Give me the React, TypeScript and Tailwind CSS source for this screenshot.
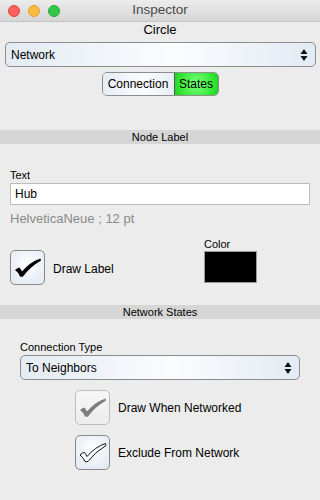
import React from "react";

const font = { fontFamily: '"Liberation Sans", Arial, sans-serif' };

function Arrows() {
  return (
    <svg width="8" height="14" viewBox="0 0 8 14" className="block">
      <path d="M4 1 L7.5 6 L0.5 6 Z" fill="#111" />
      <path d="M4 13 L7.5 8 L0.5 8 Z" fill="#111" />
    </svg>
  );
}

function Popup({ label, className }: { label: string; className: string }) {
  return (
    <div
      className={
        "h-[25px] rounded-[5px] border border-[#8d8d8d] bg-[linear-gradient(90deg,#e3ebf4,#fbfcfe_55%,#e2eaf3)] flex items-center justify-between pl-[5px] pr-[7px] text-[12px] text-black " +
        className
      }
    >
      <span>{label}</span>
      <Arrows />
    </div>
  );
}

const checkPath =
  "M5 20 Q7.5 17.5 9.5 17.5 Q11 19.5 12 21.5 Q20 12 30.5 8.5 L31 10.5 Q20 17 13 26.5 Q11.5 27 10 26.5 Q8 22 5 20 Z";

function CheckBox({ kind }: { kind: "black" | "gray" | "outline" }) {
  const border = kind === "gray" ? "border-[#bdbdbd]" : "border-[#8a8a8a]";
  const bg =
    kind === "gray"
      ? "bg-[linear-gradient(180deg,#f7f7f7,#ececec)]"
      : "bg-[radial-gradient(circle_at_50%_40%,#ffffff,#e6edf5_75%,#dfe7f0)]";
  return (
    <div className={"w-[35px] h-[35px] rounded-[5px] border " + border + " " + bg + " shrink-0"}>
      <svg width="33" height="33" viewBox="1 1 33 33" className="block">
        {kind === "black" && <path d={checkPath} fill="#000" />}
        {kind === "gray" && <path d={checkPath} fill="#7d7d7d" />}
        {kind === "outline" && (
          <path d={checkPath} fill="#fafcfe" stroke="#111" strokeWidth="1" strokeLinejoin="round" />
        )}
      </svg>
    </div>
  );
}

export default function App() {
  return (
    <div className="w-[320px] h-[500px] bg-[#ececec] overflow-hidden flex flex-col" style={font}>
      {/* title bar */}
      <div className="relative h-[22px] shrink-0 bg-[linear-gradient(180deg,#ececec,#d6d6d6)] border-b border-[#c4c4c4] flex items-center justify-center">
        <div className="absolute left-[8px] top-[5px] flex gap-[8px]">
          <div className="w-[12px] h-[12px] rounded-full bg-[#fc605c] border border-[#e0443e]" />
          <div className="w-[12px] h-[12px] rounded-full bg-[#fdbc40] border border-[#de9f34]" />
          <div className="w-[12px] h-[12px] rounded-full bg-[#34c84a] border border-[#27aa35]" />
        </div>
        <span className="text-[13.5px] text-[#4a4a4a]">Inspector</span>
      </div>

      <div className="h-[15px] leading-[15px] text-[13px] text-center text-black">Circle</div>

      <Popup label="Network" className="mt-[5px] ml-[5px] mr-[4px]" />

      <div className="mt-[5px] flex justify-center">
        <div className="h-[24px] flex rounded-[5px] border border-[#8d8d8d] overflow-hidden text-[12px] text-black">
          <div className="w-[72px] flex items-center justify-center bg-[linear-gradient(90deg,#e6edf5,#fbfcfe_60%,#e6edf5)] border-r border-[#555]">
            Connection
          </div>
          <div className="w-[43px] flex items-center justify-center bg-[radial-gradient(circle_at_50%_50%,#7cff7c,#33e833_70%,#22cc22)]">
            States
          </div>
        </div>
      </div>

      <div className="mt-[34px] h-[14px] leading-[14px] bg-[#d6d6d6] text-center text-[11px] text-black">
        Node Label
      </div>

      <div className="mt-[25px] ml-[10px] h-[13px] leading-[13px] text-[11px] text-black">Text</div>
      <div className="mt-[1px] ml-[10px] w-[300px] h-[22px] bg-white border border-[#bdbdbd] flex items-center pl-[4px] text-[12px] text-black">
        Hub
      </div>

      <div className="mt-[6px] ml-[10px] h-[16px] leading-[16px] text-[13px] text-[#8a8a8a]">
        HelveticaNeue ; 12 pt
      </div>

      <div className="mt-[11px] flex">
        <div className="ml-[10px] w-[194px] pt-[12px] flex items-center">
          <CheckBox kind="black" />
          <span className="ml-[8px] mt-[3px] text-[12px] text-black">Draw Label</span>
        </div>
        <div className="flex flex-col">
          <div className="h-[12px] leading-[12px] text-[11px] text-black">Color</div>
          <div className="mt-[1px] w-[53px] h-[32px] bg-black border border-[#9a9a9a]" />
        </div>
      </div>

      <div className="mt-[20px] h-[14px] leading-[14px] bg-[#d6d6d6] text-center text-[11px] text-black">
        Network States
      </div>

      <div className="mt-[22px] ml-[20px] h-[13px] leading-[13px] text-[11px] text-black">Connection Type</div>
      <Popup label="To Neighbors" className="mt-[1px] ml-[20px] w-[280px]" />

      <div className="mt-[10px] ml-[75px] flex items-center">
        <CheckBox kind="gray" />
        <span className="ml-[8px] text-[12px] text-black">Draw When Networked</span>
      </div>
      <div className="mt-[10px] ml-[75px] flex items-center">
        <CheckBox kind="outline" />
        <span className="ml-[8px] text-[12px] text-black">Exclude From Network</span>
      </div>
    </div>
  );
}
